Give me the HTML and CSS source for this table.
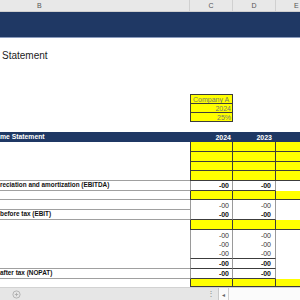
FILE: index.html
```html
<!DOCTYPE html>
<html>
<head>
<meta charset="utf-8">
<link rel="stylesheet" href="styles.css">
</head>
<body>
<div class="sheet">
  <div class="colhead">
    <div class="h hb">B</div>
    <div class="h hc">C</div>
    <div class="h hd">D</div>
    <div class="h he">E</div>
  </div>
  <div class="band"></div>
  <div class="title">Statement</div>

  <div class="row in first"><div class="c cb"></div><div class="c cc">Company A</div></div>
  <div class="row in h9"><div class="c cb"></div><div class="c cc r">2024</div></div>
  <div class="row in h9"><div class="c cb"></div><div class="c cc r">25%</div></div>
  <div class="gap"></div>

  <div class="row hdr"><div class="c cb">me Statement</div><div class="c cc">2024</div><div class="c cd">2023</div><div class="c ce"></div></div>
  <div class="row yl"><div class="c cb"></div><div class="c cc"></div><div class="c cd"></div><div class="c ce"></div></div>
  <div class="row yl"><div class="c cb"></div><div class="c cc"></div><div class="c cd"></div><div class="c ce"></div></div>
  <div class="row yl h9"><div class="c cb"></div><div class="c cc"></div><div class="c cd"></div><div class="c ce"></div></div>
  <div class="row yl ub"><div class="c cb"></div><div class="c cc"></div><div class="c cd"></div><div class="c ce"></div></div>
  <div class="row tot ub"><div class="c cb">reciation and amortization (EBITDA)</div><div class="c cc">-00</div><div class="c cd">-00</div><div class="c ce"></div></div>
  <div class="row yl h9 ub"><div class="c cb"></div><div class="c cc"></div><div class="c cd"></div><div class="c ce"></div></div>
  <div class="row num ub"><div class="c cb"></div><div class="c cc">-00</div><div class="c cd">-00</div><div class="c ce"></div></div>
  <div class="row tot ub"><div class="c cb">before tax (EBIT)</div><div class="c cc">-00</div><div class="c cd">-00</div><div class="c ce"></div></div>
  <div class="row yl"><div class="c cb"></div><div class="c cc"></div><div class="c cd"></div><div class="c ce"></div></div>
  <div class="row num"><div class="c cb"></div><div class="c cc">-00</div><div class="c cd">-00</div><div class="c ce"></div></div>
  <div class="row num h9"><div class="c cb"></div><div class="c cc">-00</div><div class="c cd">-00</div><div class="c ce"></div></div>
  <div class="row num lastn"><div class="c cb"></div><div class="c cc">-00</div><div class="c cd">-00</div><div class="c ce"></div></div>
  <div class="row tot ub"><div class="c cb"></div><div class="c cc">-00</div><div class="c cd">-00</div><div class="c ce"></div></div>
  <div class="row tot ub"><div class="c cb">after tax (NOPAT)</div><div class="c cc">-00</div><div class="c cd">-00</div><div class="c ce"></div></div>
  <div class="row yl h8"><div class="c cb"></div><div class="c cc"></div><div class="c cd"></div><div class="c ce"></div></div>

  <div class="scroll">
    <div class="tabs">
      <svg class="plus" width="9" height="9" viewBox="0 0 9 9"><circle cx="4.5" cy="4.5" r="3.6" fill="none" stroke="#a8a8a8" stroke-width="0.8"/><path d="M4.5 2.8v3.4M2.8 4.5h3.4" stroke="#a8a8a8" stroke-width="0.8"/></svg>
      <span class="grip">&#8942;</span>
    </div>
    <div class="track"><span class="arrow">&#9666;</span></div>
  </div>
</div>
</body>
</html>
```
FILE: styles.css
```css
* { box-sizing: border-box; margin: 0; padding: 0; }
body { margin: 0; width: 300px; height: 300px; overflow: hidden; background: #fff; font-family: "Liberation Sans", Arial, sans-serif; }
.sheet { width: 300px; }

.colhead { display: flex; height: 12px; background: #e8e8e8; border-bottom: 1px solid #cfcfcf; font-size: 7px; color: #555; }
.colhead .h { display: flex; align-items: center; border-right: 1px solid #d0d0d0; }
.hb { width: 190px; padding-left: 37px; }
.hc { width: 43px; justify-content: center; }
.hd { width: 43px; justify-content: center; }
.he { flex: 1; padding-left: 18px; border-right: none !important; }

.band { height: 26px; background: #1f3864; border-bottom: 1px solid #8a9bbd; }
.title { height: 56px; padding: 11px 0 0 2px; font-size: 10px; line-height: 14px; color: #222; }
.gap { height: 10px; }

.row { display: flex; height: 10px; }
.row.h9 { height: 9px; }
.row.h8 { height: 8px; }
.c { display: flex; align-items: center; font-size: 7px; line-height: 1; white-space: nowrap; overflow: hidden; color: #333; }
.cb { width: 190px; font-size: 6.4px; }
.cc { width: 43px; justify-content: flex-end; padding-right: 3px; }
.cd { width: 43px; justify-content: flex-end; padding-right: 4px; }
.ce { flex: 1; }

/* input box */
.in .cc { background: #ffff00; border: 1px solid #3c3c3c; border-top: none; color: #737a68; justify-content: flex-start; padding-left: 2px; }
.in .cc.r { justify-content: flex-end; padding-right: 1px; }
.in.first .cc { border-top: 1px solid #3c3c3c; }

/* header */
.hdr { background: #1f3864; }
.hdr .c { color: #fff; font-weight: bold; }
.hdr .cb { font-size: 6.8px; }
.hdr .cc { padding-right: 2px; }

/* yellow rows */
.yl .cc, .yl .cd, .yl .ce { background: #ffff00; border-bottom: 1px solid #3c3c3c; }
.yl .cc { border-left: 1px solid #3c3c3c; border-right: 1px solid #3c3c3c; }
.yl .cd { border-right: 1px solid #3c3c3c; }

/* number rows */
.num .cc { border-left: 1px solid #9a9a9a; border-right: 1px solid #9a9a9a; }
.num .cd { border-right: 1px solid #9a9a9a; }
.lastn .cc, .lastn .cd { border-bottom: 1px solid #3c3c3c; }

/* total rows */
.tot .c { font-weight: bold; color: #111; }
.tot .cc { border-left: 1px solid #9a9a9a; border-right: 1px solid #9a9a9a; border-bottom: 1px solid #3c3c3c; }
.tot .cd { border-right: 1px solid #9a9a9a; border-bottom: 1px solid #3c3c3c; }

.ub .cb { border-bottom: 1px solid #a0a0a0; }

/* bottom bar */
.scroll { display: flex; height: 13px; background: #e6e6e6; border-top: 1px solid #d2d2d2; }
.tabs { width: 218px; display: flex; align-items: center; padding-left: 12px; }
.plus { display: block; }
.grip { margin-left: 186px; font-size: 8px; color: #8a8a8a; line-height: 1; }
.track { flex: 1; background: #fbfbfb; border-left: 1px solid #c8c8c8; display: flex; align-items: center; }
.arrow { font-size: 6px; color: #666; padding-left: 3px; width: 10px; height: 100%; display: flex; align-items: center; border-right: 1px solid #d0d0d0; }
```
